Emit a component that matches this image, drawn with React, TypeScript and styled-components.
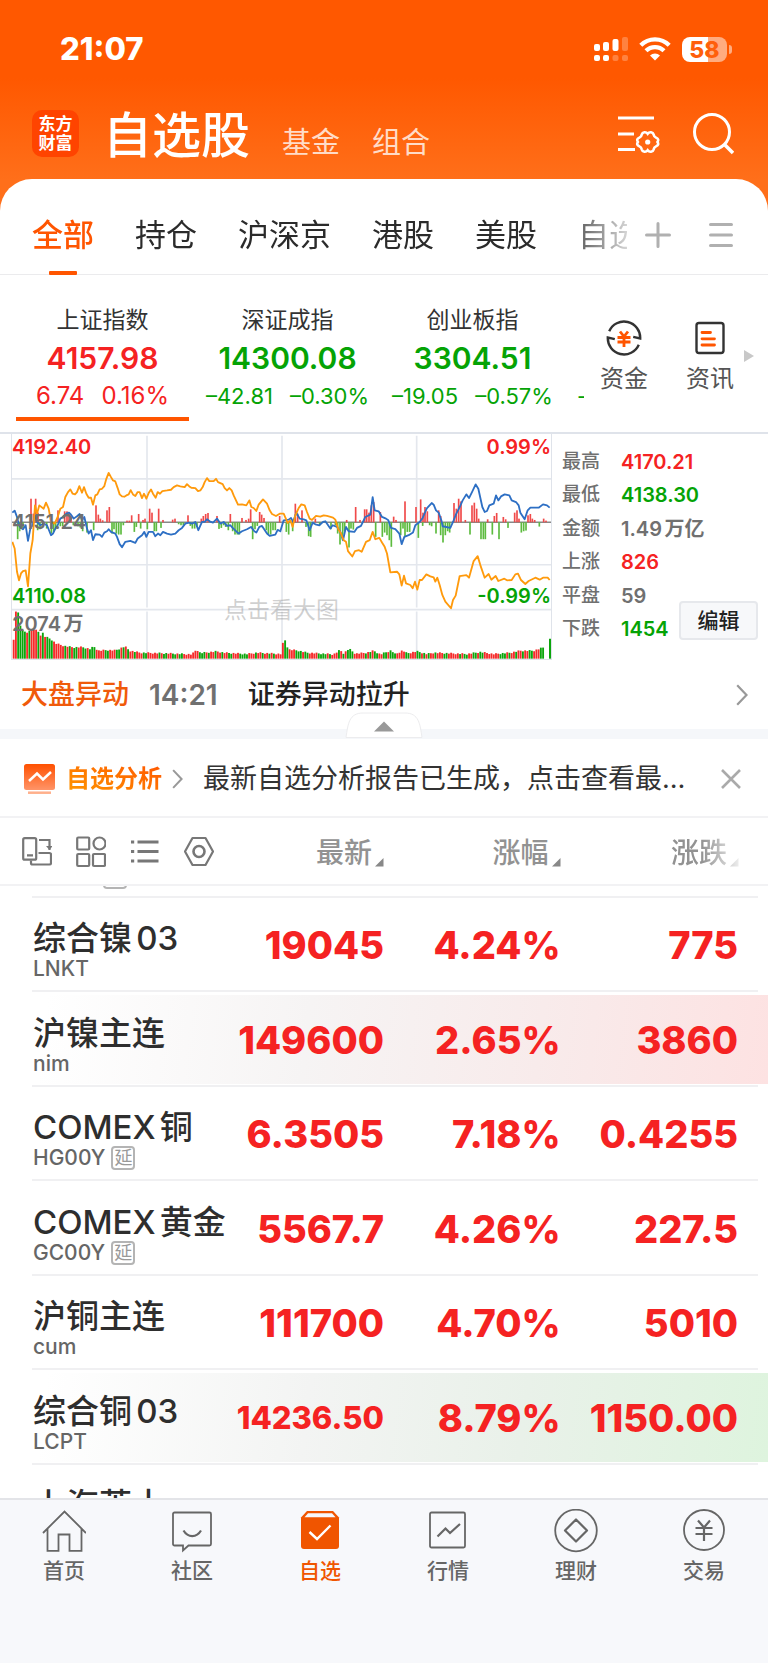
import React from "react";
import styled, { createGlobalStyle, css } from "styled-components";

const RED = "#f52222";
const GREEN = "#05a305";
const ORANGE = "#ff5500";

const GlobalStyle = createGlobalStyle`
  *, *::before, *::after { box-sizing: border-box; }
  body { margin: 0; background: #fff; text-autospace: normal; }
  body, button { font-family: Inter, "Noto Sans CJK SC", sans-serif; }
  button { margin: 0; padding: 0; border: 0; background: none; color: inherit; cursor: pointer; }
  a { color: inherit; text-decoration: none; }
  svg { display: block; flex: none; }
`;

const Screen = styled.div`
  display: flex;
  flex-direction: column;
  height: 100vh;
  background: linear-gradient(#ff5800 0, #ff5800 78px, #ff6f1a 180px);
  color: #2b2b2b;
`;

/* ---------- header ---------- */

const StatusBar = styled.div`
  display: flex;
  flex: none;
  align-items: center;
  justify-content: space-between;
  height: 98px;
  padding: 0 36px 0 60px;
  color: #fff;
`;

const Clock = styled.time`
  font-size: 31px;
  font-weight: 800;
  line-height: 36px;
`;

const StatusIcons = styled.div`
  display: flex;
  align-items: center;
  gap: 11px;
`;

const TitleBar = styled.header`
  display: flex;
  flex: none;
  align-items: center;
  height: 81px;
  padding: 0 34px 10px 32px;
  color: #fff;
`;

const Logo = styled.div`
  display: grid;
  place-content: center;
  width: 47px;
  height: 47px;
  border-radius: 10px;
  background: #ff4400;
  font-size: 17px;
  font-weight: 700;
  line-height: 19px;
  text-align: center;
`;

const TitleNav = styled.nav`
  display: flex;
  flex: 1;
  align-items: baseline;
  gap: 32px;
  margin-left: 24px;
  padding-top: 12px;
`;

const TitleLink = styled.a<{ $active?: boolean }>`
  font-size: ${(p) => (p.$active ? "49px" : "29px")};
  font-weight: ${(p) => (p.$active ? 500 : 400)};
  line-height: 56px;
  color: ${(p) => (p.$active ? "#fff" : "#ffdcc8")};
`;

const TitleActions = styled.div`
  display: flex;
  gap: 32px;
`;

const Sheet = styled.main`
  display: flex;
  flex: 1;
  flex-direction: column;
  min-height: 0;
  border-radius: 32px 32px 0 0;
  background: #fff;
`;

/* ---------- group tabs ---------- */

const GroupBar = styled.div`
  display: flex;
  flex: none;
  align-items: center;
  height: 96px;
  padding: 16px 35px 0 32px;
  border-bottom: 1px solid #ebebed;
`;

const GroupTabs = styled.nav`
  display: flex;
  flex: 1;
  align-self: stretch;
  align-items: center;
  gap: 41px;
  min-width: 0;
  height: 80px;
  overflow: hidden;
  white-space: nowrap;
  mask-image: linear-gradient(90deg, #000 calc(100% - 70px), rgba(0, 0, 0, 0.2));
`;

const GroupTab = styled.a<{ $active?: boolean }>`
  position: relative;
  flex: none;
  font-size: 31px;
  font-weight: ${(p) => (p.$active ? 500 : 400)};
  line-height: 80px;
  color: ${(p) => (p.$active ? ORANGE : "#2b2b2b")};
  ${(p) =>
    p.$active &&
    css`
      &::after {
        content: "";
        position: absolute;
        bottom: 0;
        left: 17px;
        right: 17px;
        height: 4px;
        border-radius: 1px;
        background: ${ORANGE};
      }
    `}
`;

const GroupActions = styled.div`
  display: flex;
  gap: 38px;
  margin-left: 18px;
`;

/* ---------- index strip ---------- */

const IndexStrip = styled.section`
  display: flex;
  flex: none;
`;

const IndexCards = styled.div`
  display: flex;
  flex: 1;
  min-width: 0;
  padding: 31px 0 11px 10px;
  overflow: hidden;
`;

const IndexCard = styled.button<{ $up?: boolean; $active?: boolean }>`
  display: flex;
  flex: 0 0 185px;
  flex-direction: column;
  align-items: center;
  gap: 4px;
  color: ${(p) => (p.$up ? RED : GREEN)};
  &::after {
    content: "";
    width: 173px;
    height: 4px;
    margin-top: 3px;
    background: ${(p) => (p.$active ? ORANGE : "transparent")};
  }
`;

const IndexName = styled.span`
  font-size: 23px;
  line-height: 28px;
  color: #333;
`;

const IndexValue = styled.span`
  font-size: 30px;
  font-weight: 600;
  line-height: 40px;
`;

const IndexChange = styled.span<{ $long: boolean }>`
  display: flex;
  gap: 17px;
  font-size: ${(p) => (p.$long ? "22px" : "24px")};
  font-weight: 400;
  line-height: 28px;
  white-space: nowrap;
`;

/* leading edge of the next index card, cut off by the shortcuts */
const NextCard = styled.span`
  flex: none;
  padding: 76px 0 0 12px;
  font-size: 22px;
  line-height: 28px;
  color: ${GREEN};
`;

const Shortcuts = styled.div`
  display: flex;
  flex: none;
  align-items: flex-start;
  padding: 45px 14px 0 16px;
`;

const Shortcut = styled.button`
  display: flex;
  flex-direction: column;
  align-items: center;
  gap: 7px;
  width: 48px;
  font-size: 24px;
  line-height: 32px;
  color: #555;
  & + & {
    margin-left: 38px;
  }
`;

const MoreArrow = styled.svg`
  align-self: flex-start;
  margin: 30px 0 0 10px;
`;

/* ---------- chart ---------- */

const Market = styled.section`
  display: flex;
  flex: none;
  height: 228px;
  border-top: 2px solid #dfe3ea;
`;

const ChartBox = styled.div`
  position: relative;
  flex: 1;
  min-width: 0;
  margin-left: 11px;
  border: 1px solid #dfe3ea;
  border-top: 0;
`;

const ChartCanvas = styled.svg`
  width: 100%;
  height: 100%;
`;

const ChartLabel = styled.span<{ $top: number; $right?: boolean; $color: string }>`
  position: absolute;
  top: ${(p) => p.$top}px;
  ${(p) => (p.$right ? "right: 0;" : "left: 0;")}
  font-size: 20px;
  font-weight: 600;
  line-height: 24px;
  color: ${(p) => p.$color};
`;

const Watermark = styled.span`
  position: absolute;
  top: 160px;
  left: 0;
  right: 0;
  font-size: 23px;
  line-height: 32px;
  text-align: center;
  color: rgba(120, 120, 120, 0.35);
`;

const Facts = styled.div`
  position: relative;
  flex: none;
  width: 216px;
  padding: 11px 10px 14px 10px;
`;

const FactList = styled.dl`
  display: grid;
  grid-template-columns: 59px 1fr;
  grid-auto-rows: 1fr;
  align-items: center;
  height: 100%;
  margin: 0;
  white-space: nowrap;
`;

const FactName = styled.dt`
  font-size: 19px;
  font-weight: 500;
  line-height: 24px;
  color: #707070;
`;

const FactValue = styled.dd<{ $color: string }>`
  margin: 0;
  font-size: 20px;
  font-weight: 600;
  line-height: 24px;
  color: ${(p) => p.$color};
`;

const EditButton = styled.button`
  position: absolute;
  right: 10px;
  bottom: 20px;
  width: 79px;
  height: 39px;
  border: 2px solid #e6e8ec;
  border-radius: 4px;
  background: #f7f8fa;
  font-size: 21px;
  font-weight: 500;
  line-height: 32px;
  color: #222;
`;

/* ---------- alert and report rows ---------- */

const AlertRow = styled.a`
  display: flex;
  flex: none;
  align-items: center;
  height: 69px;
  padding: 0 20px 0 21px;
  font-size: 27px;
  font-weight: 500;
  line-height: 36px;
  color: #222;
`;

const AlertKind = styled.span`
  color: #f05a0a;
`;

const AlertTime = styled.time`
  margin: 0 30px 0 20px;
  font-size: 28px;
  font-weight: 600;
  color: #707070;
`;

const AlertText = styled.span`
  flex: 1;
`;

const Divider = styled.div`
  position: relative;
  flex: none;
  height: 10px;
  background: #f5f7fa;
`;

const FoldButton = styled.button`
  position: absolute;
  bottom: 1px;
  left: 50%;
  width: 78px;
  margin-left: -39px;
`;

const ReportRow = styled.div`
  display: flex;
  flex: none;
  align-items: center;
  height: 79px;
  padding: 2px 27px 0 23px;
  border-bottom: 2px solid #f2f2f4;
`;

const ReportTitle = styled.span`
  margin: 0 10px 0 9px;
  background: linear-gradient(20deg, #ff9a00, #ff5500);
  background-clip: text;
  font-size: 24px;
  font-weight: 700;
  line-height: 32px;
  color: transparent;
`;

const ReportText = styled.a`
  flex: 1;
  min-width: 0;
  margin: 0 20px;
  overflow: hidden;
  font-size: 27px;
  line-height: 36px;
  white-space: nowrap;
  color: #333;
`;

/* ---------- quotes table ---------- */

const QuoteScroller = styled.div`
  flex: 1;
  min-height: 0;
  overflow-y: auto;
  scrollbar-width: none;
`;

const QuoteTable = styled.table`
  width: 100%;
  border-collapse: separate;
  border-spacing: 0;
  table-layout: fixed;
`;

const HeadCell = styled.th<{ $width: string; $tools?: boolean; $end?: boolean }>`
  position: sticky;
  top: 0;
  z-index: 1;
  width: ${(p) => p.$width};
  height: 68px;
  padding: ${(p) => (p.$tools ? "2px 0 0 22px" : p.$end ? "4px 29px 0 0" : "4px 0 0")};
  border-bottom: 2px solid #f2f2f4;
  background: #fff;
`;

const Tools = styled.div`
  display: flex;
  gap: 24px;
  width: max-content;
`;

const SortButton = styled.button<{ $fade?: boolean }>`
  display: flex;
  align-items: flex-end;
  gap: 3px;
  margin-left: auto;
  font-size: 28px;
  font-weight: 500;
  line-height: 36px;
  color: #929292;
  svg {
    margin-bottom: 4px;
  }
  ${(p) => p.$fade && "mask-image: linear-gradient(90deg, #000 45%, rgba(0, 0, 0, 0.15));"}
`;

const flashTint = {
  up: "linear-gradient(97deg, #ffffff 6%, #f6f4f4 40%, #f8ebeb 70%, #fde2e2)",
  down: "linear-gradient(97deg, #ffffff 6%, #f3f4f3 40%, #e9f1e9 68%, #def4de)",
};

const QuoteRow = styled.tr<{ $flash?: "up" | "down" }>`
  height: 94px;
  background-image: linear-gradient(#f0f0f2, #f0f0f2), ${(p) => (p.$flash ? flashTint[p.$flash] : "none")};
  background-position: 32px 100%, 0 3px;
  background-size: calc(100% - 42px) 2px, 100% calc(100% - 6px);
  background-repeat: no-repeat;
  &:nth-child(odd) {
    height: 95px;
  }
  &:first-child {
    height: 12px;
  }
`;

const NameCell = styled.th`
  padding: 10px 0 0 33px;
  font-weight: 400;
  text-align: left;
  white-space: nowrap;
`;

const QuoteName = styled.div`
  font-size: 33px;
  font-weight: 500;
  line-height: 38px;
  color: #2e2e2e;
`;

const QuoteCode = styled.div`
  display: flex;
  align-items: center;
  gap: 6px;
  font-size: 21px;
  font-weight: 500;
  line-height: 24px;
  color: #666;
`;

const DelayTag = styled.span`
  width: 24px;
  height: 24px;
  border: 2px solid #b4b4b4;
  border-radius: 4px;
  font-size: 18px;
  font-weight: 400;
  line-height: 19px;
  text-align: center;
  color: #999;
`;

const PeekCell = styled.th`
  padding: 0 0 0 103px;
  font-weight: 400;
`;

const PeekClip = styled.div`
  display: flex;
  align-items: flex-end;
  height: 3px;
  margin-bottom: 9px;
  overflow: hidden;
`;

const NumberCell = styled.td<{ $small?: boolean; $end?: boolean }>`
  padding: 0 ${(p) => (p.$end ? "30px" : "0")} 0 0;
  font-size: ${(p) => (p.$small ? "31px" : "38px")};
  font-weight: 800;
  line-height: 44px;
  text-align: right;
  white-space: nowrap;
  color: ${RED};
`;

/* ---------- bottom navigation ---------- */

const BottomNav = styled.nav`
  display: flex;
  flex: none;
  height: 165px;
  padding-top: 9px;
  border-top: 2px solid #e3e4e8;
  background: #f7f8fb;
`;

const NavItem = styled.a<{ $active?: boolean }>`
  display: flex;
  flex: 1;
  flex-direction: column;
  align-items: center;
  gap: 3px;
  font-size: 21px;
  font-weight: 500;
  line-height: 30px;
  color: ${(p) => (p.$active ? "#f05500" : "#666")};
`;

/* ---------- icons ---------- */

const SignalIcon = () => (
  <svg width="34" height="26" viewBox="0 0 34 26" fill="#fff">
    <rect x="0" y="8" width="6" height="7" rx="2" />
    <rect x="9" y="6" width="6" height="9" rx="2" />
    <rect x="18.500" y="3" width="6" height="12" rx="2" />
    <rect x="28" y="1" width="6" height="14" rx="2" opacity=".25" />
    <rect x="0" y="19" width="6" height="6" rx="2" />
    <rect x="9" y="19" width="6" height="6" rx="2" />
    <rect x="18.500" y="19" width="6" height="6" rx="2" opacity=".25" />
    <rect x="28" y="19" width="6" height="6" rx="2" opacity=".25" />
  </svg>
);

const WifiIcon = () => (
  <svg width="32" height="24" viewBox="0 0 32 24" fill="none" stroke="#fff" strokeWidth="4.300">
    <path d="M1.800 8.300a20 20 0 0 1 28.400 0" />
    <path d="M7 13.800a12.700 12.700 0 0 1 18 0" />
    <path d="M16 23.500l-5-5a7.300 7.300 0 0 1 10 0z" fill="#fff" stroke="none" />
  </svg>
);

const Battery = styled.div`
  display: flex;
  align-items: center;
  gap: 2px;
  &::after {
    content: "";
    width: 3px;
    height: 9px;
    border-radius: 0 3px 3px 0;
    background: rgba(255, 255, 255, 0.5);
  }
`;

const BatteryLevel = styled.span`
  width: 45px;
  height: 25px;
  border-radius: 8px;
  background: linear-gradient(90deg, #fff 58%, rgba(255, 255, 255, 0.5) 58%);
  font-size: 23px;
  font-weight: 800;
  line-height: 26px;
  text-align: center;
  color: #ff5f0a;
`;

const ListGearIcon = () => (
  <svg width="42" height="42" viewBox="0 0 42 42" fill="none" stroke="#fff" strokeWidth="2.800">
    <path d="M0 5h36M0 21h16M0 36.500h17" />
    <path
      transform="translate(29.700 29)"
      d="M0-8.200C1.700-10.500 5.200-10.200 6-7.300C6.300-5.700 7-5 8.300-4.400C11-3.200 10.900-1.700 9.800 0C10.900 1.700 11 3.200 8.300 4.400C7 5 6.300 5.700 6 7.300C5.200 10.200 1.700 10.500 0 8.200C-1.700 10.500-5.200 10.200-6 7.300C-6.300 5.700-7 5-8.300 4.400C-11 3.200-10.900 1.700-9.800 0C-10.900-1.700-11-3.200-8.300-4.400C-7-5-6.300-5.700-6-7.300C-5.200-10.200-1.700-10.500 0-8.200z"
      strokeWidth="2.600"
    />
    <circle cx="29.700" cy="29" r="2.600" fill="#fff" stroke="none" />
  </svg>
);

const SearchIcon = () => (
  <svg width="42" height="42" viewBox="0 0 42 42" fill="none" stroke="#fff" strokeWidth="3">
    <circle cx="20" cy="19" r="17.500" />
    <path d="M32 31l9 9" strokeWidth="3.500" />
  </svg>
);

const PlusIcon = () => (
  <svg width="26" height="26" viewBox="0 0 26 26" stroke="#b0b0b0" strokeWidth="3" strokeLinecap="round">
    <path d="M13 1.500v23M1.500 13h23" />
  </svg>
);

const MenuIcon = () => (
  <svg width="24" height="26" viewBox="0 0 24 26" stroke="#b0b0b0" strokeWidth="3" strokeLinecap="round">
    <path d="M1.500 2.500h21M1.500 13h21M1.500 23.500h21" />
  </svg>
);

const FundsIcon = () => (
  <svg width="36" height="36" viewBox="0 0 36 36" fill="none" stroke="#333" strokeWidth="2.400">
    <path d="M3.200 11.200A16.200 16.200 0 0 1 34.200 18.500l-7-1.600" />
    <path d="M32.800 24.800A16.200 16.200 0 0 1 1.800 17.500l7 1.600" />
    <path d="M14 11.500l4 5 4-5M11.500 17.500h13M11.500 22h13M18 16v11" stroke={ORANGE} strokeWidth="2.800" />
  </svg>
);

const NewsIcon = () => (
  <svg width="30" height="36" viewBox="0 0 30 36" fill="none" stroke="#333" strokeWidth="2.400">
    <rect x="1.500" y="3" width="27" height="30" rx="2.500" />
    <path d="M7 12.500h8.500M7 18.800h12.500M7 25h12.500" stroke={ORANGE} strokeWidth="2.800" strokeLinecap="round" />
  </svg>
);

const ChevronIcon = ({ width, height, color }: { width: number; height: number; color: string }) => (
  <svg width={width} height={height} viewBox="0 0 12 22" fill="none" stroke={color} strokeWidth="2.200">
    <path d="M1.200 1.200L10.500 11l-9.300 9.800" />
  </svg>
);

const FoldIcon = () => (
  <svg width="78" height="26" viewBox="0 0 78 26">
    <path d="M1 25.500C3 12 4 1 18 1h42c14 0 15 11 17 24.500z" fill="#fff" stroke="#ececee" />
    <path d="M29 19.500l10-10 10 10z" fill="#999" />
  </svg>
);

const ReportIcon = () => (
  <svg width="34" height="32" viewBox="0 0 34 32">
    <defs>
      <linearGradient id="reportFill" x1="0" y1="0" x2="0" y2="1">
        <stop offset="0" stopColor="#ff5000" />
        <stop offset="1" stopColor="#ff9468" />
      </linearGradient>
    </defs>
    <rect x="1" y="1" width="31" height="26" rx="2.500" fill="url(#reportFill)" />
    <path d="M6 18l8-7.500 6 6L28 9" fill="none" stroke="#fff" strokeWidth="2.500" />
    <path d="M5 29.700h23" stroke="#ffb08c" strokeWidth="2.500" />
  </svg>
);

const CloseIcon = () => (
  <svg width="20" height="20" viewBox="0 0 20 20" stroke="#aaa" strokeWidth="2.600">
    <path d="M1 1l18 18M19 1L1 19" />
  </svg>
);

const toolProps = { width: 30, height: 32, viewBox: "0 0 30 32", fill: "none", stroke: "#777", strokeWidth: 2.2 };

const RotateIcon = () => (
  <svg {...toolProps}>
    <rect x="1.200" y="2.200" width="13" height="21.500" rx="1.500" />
    <path d="M5 19.300h6M17 4h10.500v10" />
    <path d="M24 10l3.500 4 3-4z" fill="#777" stroke="none" />
    <path d="M16.500 17H27.500a1.500 1.500 0 0 1 1.500 1.500V27a1.500 1.500 0 0 1-1.500 1.500H10.500A1.500 1.500 0 0 1 9 27v-2.500" />
  </svg>
);

const GridIcon = () => (
  <svg {...toolProps}>
    <rect x="1.200" y="1.500" width="12" height="12" rx="1" />
    <circle cx="23.500" cy="7.500" r="6" />
    <rect x="1.200" y="18" width="12" height="12" rx="1" />
    <rect x="17" y="18" width="12" height="12" rx="1" />
  </svg>
);

const ListIcon = () => (
  <svg {...toolProps} strokeWidth="3">
    <path d="M7.500 6h21M7.500 15.500h21M7.500 25h21" />
    <path d="M1 6h3.200M1 15.500h3.200M1 25h3.200" strokeWidth="3.200" />
  </svg>
);

const HexIcon = () => (
  <svg {...toolProps}>
    <path d="M8.500 2h13l7.500 13.500-7.500 13.500h-13L1 15.500z" strokeLinejoin="round" />
    <circle cx="15" cy="15.500" r="5.500" strokeWidth="2.600" />
  </svg>
);

const SortMark = () => (
  <svg width="9" height="9" viewBox="0 0 9 9">
    <path d="M8.500 0v8.500H0z" fill="#888" />
  </svg>
);

const navProps = { width: 44, height: 44, viewBox: "0 0 44 44", fill: "none", stroke: "#666", strokeWidth: 1.8 };

const HomeIcon = () => (
  <svg {...navProps}>
    <path d="M1 24L22.500 2.500 44 24M5.500 19.800v22h11V25.500h11v16.300h12v-22" />
  </svg>
);

const CommunityIcon = () => (
  <svg {...navProps}>
    <path d="M4.500 3.500h35a1.500 1.500 0 0 1 1.500 1.500v30a1.500 1.500 0 0 1-1.500 1.500h-21l-5.500 5v-5H4.500A1.500 1.500 0 0 1 3 35V5a1.500 1.500 0 0 1 1.500-1.500z" />
    <path d="M13.500 21.500c4.500 7.500 13 7.500 17.500 0" strokeWidth="2.200" />
  </svg>
);

const WatchIcon = () => (
  <svg {...navProps}>
    <path d="M9 2h26l6 6.500V37a3 3 0 0 1-3 3H6a3 3 0 0 1-3-3V8.500z" fill="#f05500" stroke="none" />
    <path d="M10 4.300h24l3.500 4h-31z" fill="#f7f8fb" stroke="none" />
    <path d="M11.500 23l7.500 7 13.500-13.500" stroke="#fff" strokeWidth="2.400" />
  </svg>
);

const MarketIcon = () => (
  <svg {...navProps}>
    <rect x="4" y="3.500" width="35" height="35" rx="1.500" />
    <path d="M11.500 27.500l8-8 4.500 4.500 10-9" strokeWidth="2.200" />
  </svg>
);

const WealthIcon = () => (
  <svg {...navProps}>
    <circle cx="22" cy="21.500" r="20.800" />
    <path d="M22 10.500l11 11-11 11-11-11z" strokeWidth="2.200" strokeLinejoin="round" />
  </svg>
);

const TradeIcon = () => (
  <svg {...navProps}>
    <circle cx="22" cy="21" r="20" />
    <path d="M16 11.500l6 7 6-7M13.500 19h17M13.500 25h17M22 18v14" strokeWidth="2.200" />
  </svg>
);

/* ---------- intraday chart data ---------- */

const pricePath =
  "36,350 43,370 50,440 56,466 62,445 68,438 76,436 83,484 90,385 97,345 104,240 110,265 117,240 130,250 137,232 145,250 152,290 163,295 172,275 180,250 188,245 195,215 203,200 210,192 217,205 224,207 230,200 237,182 245,202 251,185 258,205 265,217 272,217 278,238 285,210 291,207 298,192 305,190 312,182 318,160 325,142 332,155 338,165 345,168 352,188 358,207 365,213 372,214 378,210 385,207 391,194 398,207 405,212 412,200 418,200 425,218 431,205 438,220 445,203 452,192 458,205 466,217 472,200 479,205 486,197 500,195 512,193 520,185 530,180 540,183 553,185 560,176 567,183 573,187 585,188 593,197 600,195 607,185 613,170 620,158 627,167 640,167 647,160 653,170 667,176 673,188 680,195 687,188 694,195 700,210 713,238 725,237 738,240 747,225 753,245 760,248 768,257 775,238 788,222 800,235 808,255 815,266 827,272 838,265 850,265 862,293 870,285 877,305 885,270 895,248 903,237 913,240 920,260 928,280 935,284 947,272 960,274 970,270 980,272 988,274 998,277 1005,283 1013,310 1022,325 1030,345 1037,350 1043,378 1056,394 1064,378 1076,375 1084,380 1097,350 1108,345 1117,320 1125,342 1137,338 1145,352 1153,365 1160,385 1170,442 1190,440 1197,448 1204,482 1211,452 1217,475 1230,480 1237,490 1244,470 1251,494 1258,465 1265,465 1278,448 1290,454 1300,457 1305,470 1311,458 1318,480 1326,510 1335,530 1352,550 1358,525 1366,512 1378,453 1398,450 1406,458 1420,408 1432,393 1440,420 1453,458 1465,447 1473,464 1486,453 1494,468 1512,461 1520,466 1534,465 1545,448 1553,446 1562,465 1575,477 1585,468 1605,458 1618,464 1628,458 1642,458 1648,465";

const leadPath =
  "36,262 43,256 50,275 56,300 62,308 68,312 76,300 83,347 90,310 97,300 104,270 110,290 120,300 130,295 140,300 152,330 158,325 165,310 172,300 180,280 188,275 198,265 206,262 212,268 220,280 230,273 238,266 245,285 252,275 260,310 265,325 272,315 278,345 285,327 298,328 305,335 312,322 320,318 325,312 332,320 345,325 350,335 358,357 365,366 375,350 390,347 405,353 412,340 425,330 432,320 438,335 445,320 458,320 465,333 473,325 480,330 488,320 500,325 512,328 525,325 535,315 545,308 555,295 565,292 575,295 585,290 594,315 605,290 613,290 620,282 628,288 638,292 650,280 660,295 670,290 680,302 690,300 697,308 715,325 725,318 740,312 752,305 762,318 768,322 777,305 785,302 800,325 808,332 825,328 832,314 840,318 850,285 865,283 872,278 878,290 888,262 898,280 910,282 918,285 928,315 937,292 945,297 957,300 968,290 975,288 990,310 997,300 1010,305 1020,320 1028,345 1037,305 1045,318 1062,320 1070,308 1082,302 1095,275 1110,268 1117,215 1123,255 1135,258 1145,275 1157,280 1164,285 1172,308 1185,312 1197,325 1204,357 1212,335 1225,330 1238,322 1245,300 1258,290 1267,278 1280,248 1294,233 1300,238 1307,255 1315,262 1323,285 1327,303 1350,308 1360,285 1368,265 1378,245 1387,225 1398,207 1406,218 1415,200 1426,177 1434,190 1446,245 1453,260 1460,257 1467,240 1480,235 1487,210 1494,225 1502,213 1513,207 1527,210 1534,225 1547,230 1555,240 1560,262 1573,282 1582,255 1590,247 1615,247 1628,237 1640,240 1648,247";

const BASELINE = 291;

/* x position and tip of every strength bar; tips above the baseline are red, below it green */
const strengthBars: [number, number][] = [
  [92, 220], [99, 265], [106, 220], [113, 262], [173, 255], [193, 258], [200, 258], [206, 262], [212, 270], [287, 240],
  [294, 268], [300, 280], [307, 285], [320, 255], [327, 245], [380, 286], [387, 286], [394, 270], [415, 266], [428, 284],
  [434, 280], [448, 250], [455, 262], [475, 250], [488, 284], [517, 283], [524, 280], [563, 270], [603, 280], [609, 272],
  [616, 266], [623, 263], [650, 272], [690, 266], [725, 278], [737, 284], [745, 280], [751, 252], [778, 260], [784, 268],
  [791, 278], [838, 272], [885, 235], [892, 265], [905, 255], [945, 280], [1039, 284], [1066, 245], [1079, 284],
  [1093, 252], [1099, 252], [1106, 262], [1113, 240], [1120, 230], [1140, 260], [1180, 274], [1187, 284], [1214, 228],
  [1247, 245], [1261, 222], [1268, 262], [1274, 245], [1281, 258], [1315, 255], [1321, 272], [1361, 233], [1368, 250],
  [1375, 220], [1382, 228], [1395, 284], [1415, 240], [1422, 232], [1429, 250], [1435, 280], [1462, 282], [1482, 272],
  [1489, 263], [1509, 275], [1516, 282], [1543, 262], [1550, 255], [1556, 280], [1583, 270], [1590, 266], [1596, 280],
  [1603, 284], [1630, 280], [1637, 286],
  [52, 342], [58, 318], [68, 310], [112, 315], [119, 312], [139, 310], [153, 325], [160, 320], [166, 312], [180, 303],
  [187, 303], [219, 300], [233, 303], [240, 307], [247, 318], [260, 322], [280, 315], [335, 325], [341, 312],
  [348, 325], [355, 328], [362, 328], [369, 300], [402, 320], [408, 305], [421, 310], [441, 312], [462, 318],
  [468, 318], [482, 308], [535, 297], [542, 300], [549, 300], [570, 302], [576, 310], [583, 310], [590, 305],
  [656, 311], [663, 308], [670, 300], [676, 305], [684, 315], [697, 318], [704, 328], [711, 328], [717, 328],
  [757, 342], [764, 312], [771, 302], [798, 315], [804, 328], [811, 328], [818, 315], [825, 315], [858, 320],
  [865, 328], [877, 318], [917, 305], [925, 333], [931, 335], [958, 300], [992, 312], [1005, 300], [1012, 325],
  [1019, 358], [1027, 345], [1033, 318], [1046, 367], [1052, 310], [1059, 313], [1126, 335], [1146, 335], [1153, 322],
  [1160, 330], [1167, 345], [1173, 365], [1201, 330], [1208, 310], [1214, 335], [1221, 320], [1228, 320], [1254, 338],
  [1267, 302], [1288, 300], [1294, 303], [1307, 325], [1321, 330], [1328, 352], [1335, 330], [1342, 318], [1348, 322],
  [1409, 328], [1442, 342], [1449, 342], [1455, 342], [1476, 328], [1496, 342], [1523, 308], [1563, 322], [1570, 318],
  [1577, 316], [1617, 304],
];

/* volume envelope: x position and bar top */
const volumeTops: [number, number][] = [
  [40, 645], [46, 560], [53, 560], [60, 602], [66, 614], [73, 620], [79, 625], [92, 614], [112, 615], [119, 636],
  [126, 622], [133, 635], [152, 643], [166, 656], [193, 664], [220, 668], [245, 667], [270, 673], [280, 665],
  [294, 678], [320, 676], [345, 677], [374, 665], [388, 678], [420, 684], [500, 686], [575, 689], [589, 674],
  [600, 685], [650, 680], [670, 684], [740, 688], [770, 684], [843, 688], [851, 633], [858, 662], [868, 675],
  [890, 677], [920, 684], [1000, 689], [1019, 676], [1030, 686], [1046, 672], [1065, 687], [1100, 684], [1120, 678],
  [1140, 689], [1173, 677], [1185, 689], [1207, 677], [1220, 686], [1250, 680], [1280, 688], [1300, 684],
  [1400, 688], [1440, 682], [1480, 688], [1530, 684], [1560, 678], [1600, 678], [1630, 668],
];

const volumeColors =
  "RRGGGGRGRRRGRGRGGGRRRRRGRGRGGRRGGRGGGRRRRGGRRRGGRGRGRRGRRRGGRRRRRGRGGRRGGRGGRRRRRRRGGGRGRRGRRGRRGGRRRGGGGRRRGRRGRRGRGRRRRGGRRRGGGRGGRR".repeat(2);

const topAt = (x: number) => {
  const next = volumeTops.findIndex(([px]) => px >= x);
  if (next <= 0) return volumeTops[next === 0 ? 0 : volumeTops.length - 1][1];
  const [x0, y0] = volumeTops[next - 1];
  const [x1, y1] = volumeTops[next];
  return y0 + ((y1 - y0) * (x - x0)) / (x1 - x0);
};

const STEP = 6.73;
const volumeBars = Array.from({ length: 237 }, (_, i) => {
  const x = 40 + i * STEP;
  const jitter = i > 12 ? ((i * 7) % 5) - 2 : 0;
  return { x, top: topAt(x) + jitter, color: volumeColors[i] === "R" ? "#f52a2a" : "#0ca50c" };
});

const IntradayChart = () => (
  <ChartCanvas viewBox="35 25 1617 678" preserveAspectRatio="none" role="img" aria-label="上证指数分时图">
    <g stroke="#e4e7ed" strokeWidth="5">
      <path d="M35 160H1652M35 419H1652M35 554H1652" />
      <path d="M440 30V548M845 30V548M1249 30V548M440 560V700M845 560V700M1249 560V700" />
    </g>
    <path d={`M35 ${BASELINE}H1652`} stroke="#888" strokeWidth="4" />
    {strengthBars.map(([x, tip]) => (
      <rect
        key={`${x}-${tip}`}
        x={x - 2.5}
        y={Math.min(tip, BASELINE)}
        width="5"
        height={Math.abs(tip - BASELINE)}
        fill={tip < BASELINE ? "#f04a4a" : "#5dbb3f"}
      />
    ))}
    {volumeBars.map((bar) => (
      <rect key={bar.x} x={bar.x - 2.8} y={bar.top} width="5.600" height={702 - bar.top} fill={bar.color} />
    ))}
    <rect x="1646" y="642" width="6" height="60" fill="#0ca50c" />
    <polyline points={leadPath} fill="none" stroke="#2d6fc4" strokeWidth="5.500" strokeLinejoin="round" />
    <polyline points={pricePath} fill="none" stroke="#ff9a0c" strokeWidth="5.500" strokeLinejoin="round" />
  </ChartCanvas>
);

/* ---------- content ---------- */

const groups = ["全部", "持仓", "沪深京", "港股", "美股", "自选"];

const indices = [
  { name: "上证指数", value: "4157.98", change: "6.74", percent: "0.16%", up: true },
  { name: "深证成指", value: "14300.08", change: "–42.81", percent: "–0.30%" },
  { name: "创业板指", value: "3304.51", change: "–19.05", percent: "–0.57%" },
];

const facts = [
  { name: "最高", value: "4170.21", color: RED },
  { name: "最低", value: "4138.30", color: GREEN },
  { name: "金额", value: "1.49万亿", color: "#707070" },
  { name: "上涨", value: "826", color: RED },
  { name: "平盘", value: "59", color: "#707070" },
  { name: "下跌", value: "1454", color: GREEN },
];

type Quote = {
  name: string;
  code: string;
  last: string;
  percent: string;
  change: string;
  delayed?: boolean;
  flash?: "up" | "down";
  small?: boolean;
};

const quotes: Quote[] = [
  { name: "综合镍03", code: "LNKT", last: "19045", percent: "4.24%", change: "775" },
  { name: "沪镍主连", code: "nim", last: "149600", percent: "2.65%", change: "3860", flash: "up" },
  { name: "COMEX铜", code: "HG00Y", last: "6.3505", percent: "7.18%", change: "0.4255", delayed: true },
  { name: "COMEX黄金", code: "GC00Y", last: "5567.7", percent: "4.26%", change: "227.5", delayed: true },
  { name: "沪铜主连", code: "cum", last: "111700", percent: "4.70%", change: "5010" },
  { name: "综合铜03", code: "LCPT", last: "14236.50", percent: "8.79%", change: "1150.00", flash: "down", small: true },
  { name: "上海莱士", code: "", last: "", percent: "", change: "" },
];

const navItems = [
  { label: "首页", Icon: HomeIcon },
  { label: "社区", Icon: CommunityIcon },
  { label: "自选", Icon: WatchIcon, active: true },
  { label: "行情", Icon: MarketIcon },
  { label: "理财", Icon: WealthIcon },
  { label: "交易", Icon: TradeIcon },
];

export default function App() {
  return (
    <>
      <GlobalStyle />
      <Screen>
        <StatusBar>
          <Clock>21:07</Clock>
          <StatusIcons>
            <SignalIcon />
            <WifiIcon />
            <Battery>
              <BatteryLevel>58</BatteryLevel>
            </Battery>
          </StatusIcons>
        </StatusBar>

        <TitleBar>
          <Logo>
            <span>东方</span>
            <span>财富</span>
          </Logo>
          <TitleNav>
            <TitleLink href="#stocks" $active>自选股</TitleLink>
            <TitleLink href="#funds">基金</TitleLink>
            <TitleLink href="#portfolio">组合</TitleLink>
          </TitleNav>
          <TitleActions>
            <button aria-label="管理"><ListGearIcon /></button>
            <button aria-label="搜索"><SearchIcon /></button>
          </TitleActions>
        </TitleBar>

        <Sheet>
          <GroupBar>
            <GroupTabs>
              {groups.map((group, i) => (
                <GroupTab key={group} href={`#group-${i}`} $active={i === 0}>{group}</GroupTab>
              ))}
            </GroupTabs>
            <GroupActions>
              <button aria-label="添加分组"><PlusIcon /></button>
              <button aria-label="分组列表"><MenuIcon /></button>
            </GroupActions>
          </GroupBar>

          <IndexStrip>
            <IndexCards>
              {indices.map((item, i) => (
                <IndexCard key={item.name} $up={item.up} $active={i === 0}>
                  <IndexName>{item.name}</IndexName>
                  <IndexValue>{item.value}</IndexValue>
                  <IndexChange $long={item.change.length > 5}>
                    <span>{item.change}</span>
                    <span>{item.percent}</span>
                  </IndexChange>
                </IndexCard>
              ))}
              <NextCard>-</NextCard>
            </IndexCards>
            <Shortcuts>
              <Shortcut><FundsIcon />资金</Shortcut>
              <Shortcut><NewsIcon />资讯</Shortcut>
              <MoreArrow width="10" height="12" viewBox="0 0 10 12">
                <path d="M0 0l10 6-10 6z" fill="#c8c8c8" />
              </MoreArrow>
            </Shortcuts>
          </IndexStrip>

          <Market>
            <ChartBox>
              <Watermark>点击看大图</Watermark>
              <IntradayChart />
              <ChartLabel $top={1} $color={RED}>4192.40</ChartLabel>
              <ChartLabel $top={1} $right $color={RED}>0.99%</ChartLabel>
              <ChartLabel $top={76} $color="#707070">4151.24</ChartLabel>
              <ChartLabel $top={150} $color={GREEN}>4110.08</ChartLabel>
              <ChartLabel $top={150} $right $color={GREEN}>-0.99%</ChartLabel>
              <ChartLabel $top={178} $color="#707070">2074万</ChartLabel>
            </ChartBox>
            <Facts>
              <FactList>
                {facts.map((fact) => (
                  <React.Fragment key={fact.name}>
                    <FactName>{fact.name}</FactName>
                    <FactValue $color={fact.color}>{fact.value}</FactValue>
                  </React.Fragment>
                ))}
              </FactList>
              <EditButton>编辑</EditButton>
            </Facts>
          </Market>

          <AlertRow href="#alerts">
            <AlertKind>大盘异动</AlertKind>
            <AlertTime>14:21</AlertTime>
            <AlertText>证券异动拉升</AlertText>
            <ChevronIcon width={12} height={22} color="#999" />
          </AlertRow>
          <Divider>
            <FoldButton aria-label="收起"><FoldIcon /></FoldButton>
          </Divider>

          <ReportRow>
            <ReportIcon />
            <ReportTitle>自选分析</ReportTitle>
            <ChevronIcon width={11} height={20} color="#999" />
            <ReportText href="#report">最新自选分析报告已生成，点击查看最…</ReportText>
            <button aria-label="关闭"><CloseIcon /></button>
          </ReportRow>

          <QuoteScroller>
            <QuoteTable>
              <thead>
                <tr>
                  <HeadCell $width="28%" $tools scope="col" aria-label="名称">
                    <Tools>
                      <button aria-label="横屏"><RotateIcon /></button>
                      <button aria-label="宫格"><GridIcon /></button>
                      <button aria-label="列表"><ListIcon /></button>
                      <button aria-label="设置"><HexIcon /></button>
                    </Tools>
                  </HeadCell>
                  <HeadCell $width="22%" scope="col"><SortButton>最新<SortMark /></SortButton></HeadCell>
                  <HeadCell $width="23%" scope="col"><SortButton>涨幅<SortMark /></SortButton></HeadCell>
                  <HeadCell $width="27%" $end scope="col"><SortButton $fade>涨跌<SortMark /></SortButton></HeadCell>
                </tr>
              </thead>
              <tbody>
                <QuoteRow>
                  <PeekCell colSpan={4}>
                    <PeekClip><DelayTag /></PeekClip>
                  </PeekCell>
                </QuoteRow>
                {quotes.map((quote) => (
                  <QuoteRow key={quote.name} $flash={quote.flash}>
                    <NameCell scope="row">
                      <QuoteName>{quote.name}</QuoteName>
                      <QuoteCode>
                        {quote.code || "\u00a0"}
                        {quote.delayed && <DelayTag>延</DelayTag>}
                      </QuoteCode>
                    </NameCell>
                    <NumberCell $small={quote.small}>{quote.last}</NumberCell>
                    <NumberCell>{quote.percent}</NumberCell>
                    <NumberCell $end>{quote.change}</NumberCell>
                  </QuoteRow>
                ))}
              </tbody>
            </QuoteTable>
          </QuoteScroller>
        </Sheet>

        <BottomNav>
          {navItems.map(({ label, Icon, active }) => (
            <NavItem key={label} href={`#${label}`} $active={active}>
              <Icon />
              {label}
            </NavItem>
          ))}
        </BottomNav>
      </Screen>
    </>
  );
}
